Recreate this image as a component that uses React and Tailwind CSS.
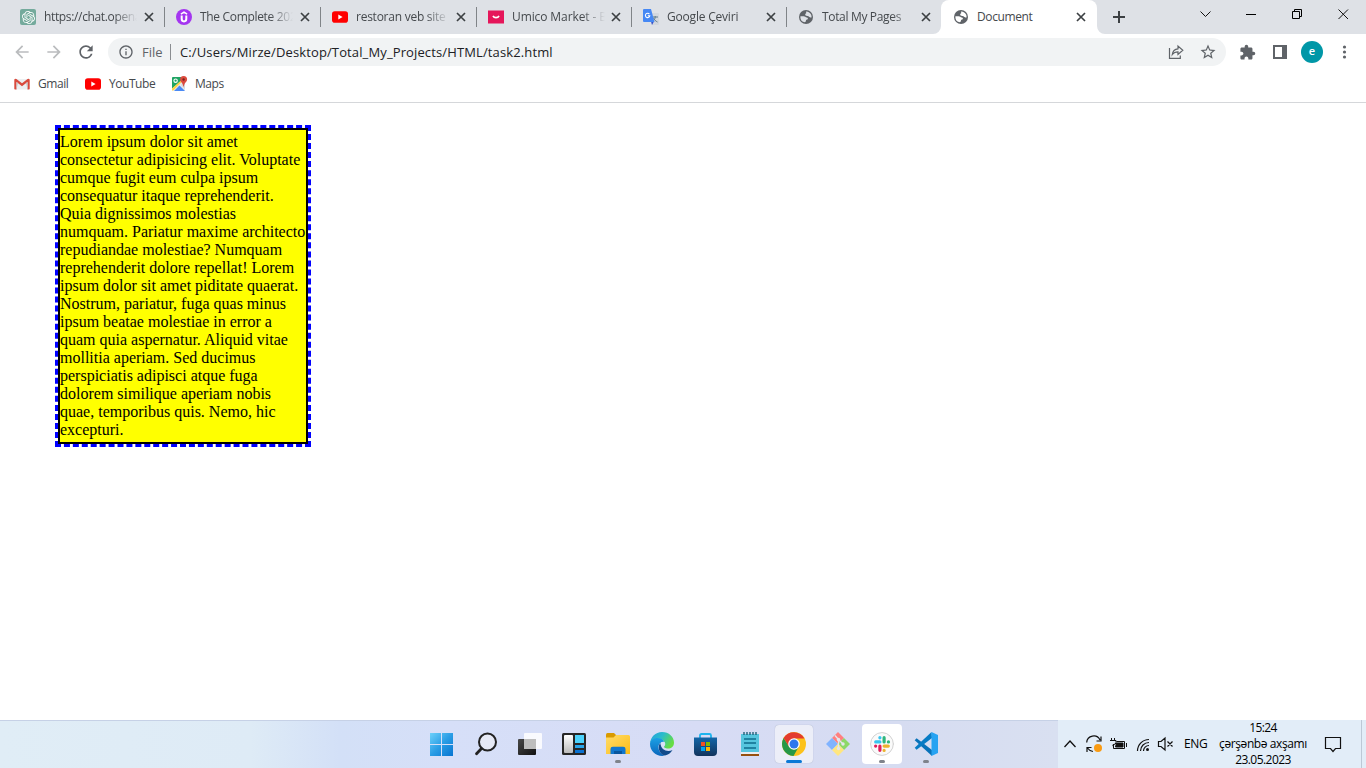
import React from "react";
import { MdExtension, MdStarBorder, MdRefresh, MdInfoOutline, MdArrowBack, MdArrowForward } from "react-icons/md";
import { SiOpenai } from "react-icons/si";

const Globe = ({ bg }) => (
  <svg width="16" height="16" viewBox="0 0 16 16">
    <circle cx="8" cy="8" r="7" fill="#5f6368" />
    <path d="M2.400 7.200h3.300c1.400 0 1.900 1.200 3 1.200 1.500 0 1.600 1.800.4 2.100-1.300.2-1 .9-1.200 1.700-.1.700-.9.600-1.400 1.100A5.600 5.600 0 0 1 2.400 7.200z" fill={bg} />
    <path d="M8.200 2.400c2.200 0 4.200 1.300 5 3.300.4 1 .5 1.900.3 2.900-.9.100-1.300-.5-2-.7-.8-.2-1.200-.9-2.300-.9-1.200 0-2.200-.6-2-1.700.1-.8 1.200-.8 1.100-1.500-.1-.5-.6-.9-.1-1.400z" fill={bg} />
  </svg>
);

const YouTube = () => (
  <svg width="16" height="16" viewBox="0 0 16 16">
    <rect y="2.300" width="16" height="11.400" rx="2.800" fill="#f00" />
    <path d="M6.300 5.500v5L10.600 8z" fill="#fff" />
  </svg>
);

const Gpt = () => (
  <span className="flex size-4 items-center justify-center rounded-[2px] bg-[#74aa9c] text-white">
    <SiOpenai size={13} />
  </span>
);

const Udemy = () => (
  <svg width="16" height="16" viewBox="0 0 16 16">
    <circle cx="8" cy="8" r="8" fill="#a435f0" />
    <path d="M4.900 5.100 8 3.200l3.100 1.900" fill="none" stroke="#fff" strokeWidth="1.500" />
    <path d="M5.700 6.500v3.600a2.300 2.300 0 0 0 4.600 0V6.500" fill="none" stroke="#fff" strokeWidth="2" />
  </svg>
);

const Umico = () => (
  <svg width="16" height="16" viewBox="0 0 16 16">
    <rect y="1.500" width="16" height="13" fill="#e5165a" />
    <path d="M5 6.800c1.100 2.400 4.900 2.400 6 0" fill="none" stroke="#fff" strokeWidth="1.600" />
  </svg>
);

const Translate = () => (
  <svg width="16" height="16" viewBox="0 0 16 16">
    <path d="M7 4h8a1 1 0 0 1 1 1v10a1 1 0 0 1-1 1H9z" fill="#d3d7dd" />
    <path d="M9.500 8h5.500M12.200 7v1c0 2-1.200 3.600-2.700 4.500M10.500 9c1 2 2 3 4 4" fill="none" stroke="#607d8b" />
    <path d="M8 12.500h3L9 16z" fill="#3450c8" />
    <path d="M1 0h7l3.500 13H1a1 1 0 0 1-1-1V1a1 1 0 0 1 1-1z" fill="#4688f4" />
    <path d="M6.400 5.100a2.200 2.200 0 1 0 .4 1.600H4.800" fill="none" stroke="#fff" strokeWidth="1.100" />
  </svg>
);

const Gmail = () => (
  <svg width="16" height="16" viewBox="0 0 16 16">
    <path d="M2 3h12v10.500H2z" fill="#eceff1" />
    <path d="M.3 3.500v9.300q0 .7.700.7h1.500V6L8 10.300 13.500 6v7.500H15q.7 0 .7-.7V3.500q-.8-1.200-2.100-.5L8 7.300 2.400 3Q1.100 2.300.3 3.500z" fill="#d94a3d" />
    <path d="M2.500 6v7.500L4 7.100zM13.500 6v7.500L12 7.100z" fill="#c5c8ca" />
  </svg>
);

const Maps = () => (
  <svg width="16" height="16" viewBox="0 0 16 16">
    <path d="M1 1h9l3 4v9.500H1A1 1 0 0 1 0 13.500V2a1 1 0 0 1 1-1z" fill="#e8eaed" />
    <path d="M1 1h8.500v3.500L0 12.500V2a1 1 0 0 1 1-1z" fill="#1fa463" />
    <path d="M2 15l5.500-5.500L13 15z" fill="#4a8af4" />
    <path d="M0 12.400 9 4.500 10 5.800 1 14.700Q0 14.500 0 13.700z" fill="#fdd447" />
    <path d="M9 9.300l4 4V8.500L11 6z" fill="#d5d8dc" />
    <circle cx="3.600" cy="4.700" r="1.700" fill="none" stroke="#fff" strokeWidth="1.100" />
    <path d="M11.600 0a3.500 3.500 0 0 1 3.500 3.500c0 2.500-3 3.300-3.200 7h-.6C11.100 6.800 8.100 6 8.100 3.500A3.500 3.500 0 0 1 11.600 0z" fill="#dc4b3e" />
    <circle cx="11.600" cy="3.500" r="1.200" fill="#7b231b" />
  </svg>
);

const CloseX = () => (
  <svg width="10" height="10" viewBox="0 0 10 10">
    <path d="M1 1l8 8M9 1L1 9" stroke="#3c4043" strokeWidth="1.700" />
  </svg>
);

const TABS = [
  { icon: <Gpt />, label: "https://chat.opena", w: "w-[156px]", sep: false, track: "tracking-[-0.35px]" },
  { icon: <Udemy />, label: "The Complete 202", w: "w-[156px]", sep: true, track: "tracking-[-0.32px]" },
  { icon: <YouTube />, label: "restoran veb site y", w: "w-[156px]", sep: true, track: "tracking-[-0.25px]" },
  { icon: <Umico />, label: "Umico Market - B", w: "w-[155px]", sep: true, track: "tracking-[-0.1px]" },
  { icon: <Translate />, label: "Google Çeviri", w: "w-[155px]", sep: true, track: "tracking-[-0.2px]" },
  { icon: <Globe bg="#dee1e6" />, label: "Total My Pages", w: "w-[155px]", sep: true, track: "tracking-[-0.33px]" },
];

function TabStrip() {
  return (
    <div className="flex h-[34px] bg-[#dee1e6] pl-2 text-[12px] text-[#45494d]">
      {TABS.map((t) => (
        <div key={t.label} className={`${t.w} relative flex h-full shrink-0 items-center pl-3`}>
          {t.sep && <span className="absolute left-0 top-[7px] h-5 w-px bg-[#808488]" />}
          {t.icon}
          <span
            className={`${t.track} ml-2 w-[93px] overflow-hidden whitespace-nowrap [mask-image:linear-gradient(to_right,#000_70px,transparent_93px)]`}
          >
            {t.label}
          </span>
          <span className="absolute right-[10px] top-3">
            <CloseX />
          </span>
        </div>
      ))}
      <div className="relative flex h-full w-[156px] shrink-0 items-center rounded-t-[8px] bg-white pl-3">
        <svg className="absolute -left-2 bottom-0" width="8" height="8">
          <path d="M8 0a8 8 0 0 1-8 8h8z" fill="#fff" />
        </svg>
        <svg className="absolute -right-2 bottom-0" width="8" height="8">
          <path d="M0 0a8 8 0 0 0 8 8H0z" fill="#fff" />
        </svg>
        <Globe bg="#fff" />
        <span className="ml-2 tracking-[-0.4px]">Document</span>
        <span className="absolute right-[11px] top-3">
          <CloseX />
        </span>
      </div>
      <svg className="ml-4 mt-[11px]" width="12" height="12">
        <path d="M6 0v12M0 6h12" stroke="#3c4043" strokeWidth="2" />
      </svg>
      <svg className="ml-auto" width="166" height="28" fill="none" stroke="#111" strokeWidth="1">
        <path d="M0.500 11.500l5 5 5-5" />
        <path d="M46 14.500h10" stroke="#000" />
        <path d="M92.500 11.500h7v7h-7zM94.500 11.500v-2h7v7h-2" stroke="#000" />
        <path d="M138.500 9.500l9.500 9.500M148 9.500L138.500 19" />
      </svg>
    </div>
  );
}

function Toolbar() {
  return (
    <div className="flex h-9 items-center bg-white text-[#5f6368]">
      <div className="flex w-[108px] items-center">
        <MdArrowBack size={20} className="ml-[12px] text-[#babcbe]" />
        <MdArrowForward size={20} className="ml-3 text-[#babcbe]" />
        <MdRefresh size={20} className="ml-3" />
      </div>
      <div className="flex h-7 w-[1118px] items-center rounded-full bg-[#f1f3f4] pl-[10px] pr-[9px] text-[13px]">
        <MdInfoOutline size={16} />
        <span className="ml-2 w-5 pt-px">File</span>
        <span className="ml-2 h-4 w-px bg-[#8a8d91]" />
        <span className="ml-[9px] whitespace-nowrap pt-px tracking-[0.125px] text-[#202124]">
          C:/Users/Mirze/Desktop/Total_My_Projects/HTML/task2.html
        </span>
        <svg className="ml-auto mr-[15px]" width="16" height="16" fill="none" stroke="#5f6368" strokeWidth="1.200">
          <path d="M1.500 4v10.400h10.800V11.500" />
          <path d="M4.300 10.500C4.700 7 6.700 5 10 4.800V2l4.800 4.300L10 10.500V7.800C7.500 7.800 5.800 8.500 4.300 10.500z" />
        </svg>
        <MdStarBorder size={18} />
      </div>
      <MdExtension size={17} className="ml-[13px]" />
      <svg className="ml-4" width="16" height="16">
        <path d="M2 2h12v12H2z" fill="none" stroke="#5f6368" strokeWidth="2" />
        <path d="M10 1h5v14h-5z" fill="#5f6368" />
      </svg>
      <span className="ml-[13px] flex size-[22px] items-center justify-center rounded-full bg-[#0097a7] pb-px text-[11px] font-semibold text-white">
        e
      </span>
      <svg className="ml-[19px]" width="5" height="14" fill="#5f6368">
        <circle cx="2.500" cy="2" r="1.600" />
        <circle cx="2.500" cy="7" r="1.600" />
        <circle cx="2.500" cy="12" r="1.600" />
      </svg>
    </div>
  );
}

function Bookmarks() {
  return (
    <div className="flex h-[33px] items-center border-b border-[#d5d7da] bg-white pb-1 pl-[14px] text-[12px] text-[#45494d]">
      <Gmail />
      <span className="ml-2 w-[47px] tracking-[-0.45px]">Gmail</span>
      <YouTube />
      <span className="ml-2 w-[63px] tracking-[-0.45px]">YouTube</span>
      <Maps />
      <span className="ml-[7px] tracking-[-0.45px]">Maps</span>
    </div>
  );
}

const LINES = [
  "Lorem ipsum dolor sit amet",
  "consectetur adipisicing elit. Voluptate",
  "cumque fugit eum culpa ipsum",
  "consequatur itaque reprehenderit.",
  "Quia dignissimos molestias",
  "numquam. Pariatur maxime architecto",
  "repudiandae molestiae? Numquam",
  "reprehenderit dolore repellat! Lorem",
  "ipsum dolor sit amet piditate quaerat.",
  "Nostrum, pariatur, fuga quas minus",
  "ipsum beatae molestiae in error a",
  "quam quia aspernatur. Aliquid vitae",
  "mollitia aperiam. Sed ducimus",
  "perspiciatis adipisci atque fuga",
  "dolorem similique aperiam nobis",
  "quae, temporibus quis. Nemo, hic",
  "excepturi.",
];

function Page() {
  return (
    <div className="h-[617px] bg-white pl-[58px] pt-[25px]">
      <p className="h-[316px] w-[250px] border-2 border-black bg-[#ff0] pt-[3px] font-['Liberation_Serif',serif] text-[16px] leading-[18px] text-black outline-3 outline-dashed outline-[#00f]">
        {LINES.map((l) => (
          <span key={l} className="block whitespace-nowrap">
            {l}
          </span>
        ))}
      </p>
    </div>
  );
}

const Start = () => (
  <svg width="24" height="24">
    <defs>
      <linearGradient id="win" x1="0" y1="0" x2="24" y2="24" gradientUnits="userSpaceOnUse">
        <stop stopColor="#6fd3fb" />
        <stop offset=".5" stopColor="#2a9de5" />
        <stop offset="1" stopColor="#0673d0" />
      </linearGradient>
    </defs>
    <path d="M0 1h11v11H0zM12 1h11v11H12zM0 13h11v11H0zM12 13h11v11H12z" fill="url(#win)" />
  </svg>
);
const Search = () => (
  <svg width="24" height="24" fill="none" stroke="#222">
    <circle cx="13.500" cy="10" r="8.500" strokeWidth="2" fill="#e6e9f5" />
    <path d="M7.500 16.500L2.500 21.800" strokeWidth="2.800" strokeLinecap="round" />
  </svg>
);
const TaskView = () => (
  <svg width="24" height="24">
    <defs>
      <linearGradient id="tv" x1="0" y1="0" x2="1" y2="1">
        <stop stopColor="#484848" />
        <stop offset="1" stopColor="#111" />
      </linearGradient>
    </defs>
    <rect x="0" y="7" width="18" height="16" rx="1" fill="url(#tv)" />
    <rect x="6" y="1" width="18" height="16" rx="1" fill="#fff" opacity=".85" />
    <path d="M6 7h12v10H7q-1 0-1-1z" fill="#bdbdbd" />
  </svg>
);
const Widgets = () => (
  <svg width="24" height="24">
    <defs>
      <linearGradient id="wd" x1="0" y1="0" x2="0" y2="1">
        <stop stopColor="#fff" />
        <stop offset="1" stopColor="#bbb" />
      </linearGradient>
    </defs>
    <rect y="1" width="24" height="22" rx="1.500" fill="#262626" />
    <rect x="2" y="3" width="9" height="18" rx="1" fill="url(#wd)" />
    <rect x="13" y="3" width="9" height="8" fill="#4cd2fc" />
    <rect x="13" y="13" width="9" height="3" fill="#28a5ea" />
    <rect x="13" y="18" width="9" height="3" fill="#0b72d0" />
  </svg>
);
const Folder = () => (
  <svg width="24" height="24">
    <defs>
      <linearGradient id="fd" x1="0" y1="0" x2="1" y2="1">
        <stop stopColor="#ffdc6a" />
        <stop offset="1" stopColor="#fcbc16" />
      </linearGradient>
    </defs>
    <path d="M0 2.500Q0 1 1.500 1H8l2 2v4H0z" fill="#d99a00" />
    <path d="M0 5.500h7.500L10 3h12.500Q24 3 24 4.500V22H0z" fill="url(#fd)" />
    <path d="M4.500 22v-5q0-2.300 2.300-2.300h10.400q2.300 0 2.300 2.300v5z" fill="#1177ce" />
    <path d="M8 19h8v3H8z" fill="#0a579f" />
  </svg>
);
const Edge = () => (
  <svg width="24" height="24">
    <defs>
      <linearGradient id="e1" x1="0" y1="0" x2="1" y2=".5">
        <stop stopColor="#239fe0" />
        <stop offset=".5" stopColor="#2bbccb" />
        <stop offset="1" stopColor="#66dd43" />
      </linearGradient>
      <linearGradient id="e2" x1="0" y1="0" x2="0" y2="1">
        <stop stopColor="#1ba0e4" />
        <stop offset="1" stopColor="#0b66bc" />
      </linearGradient>
    </defs>
    <path d="M0 11.500C.5 5 5.500 0 12 0c7 0 12 5 12 10.500 0 4-2.700 6-6 6-3 0-4.600-1-3.600-2.500C16.500 10 12 6.500 8 6.500c-4 0-7 2.200-8 5z" fill="url(#e1)" />
    <path d="M0 12c0-3.500 3.500-6 7.500-6 3.300 0 6 1.500 6.500 4-4-.5-6 3-5.500 6 .5 4 3.500 6.700 6.500 7.600C7.500 25.500 0 19.500 0 12z" fill="url(#e2)" />
    <path d="M10.500 11C7.500 13 8 22 15 23.600c3-.7 5.800-2.600 7.500-5.600-5 2.500-12 0-12-7z" fill="#114a8b" />
    <circle cx="13" cy="12" r="2.300" fill="#d8e0f6" />
  </svg>
);
const Store = () => (
  <svg width="24" height="24">
    <defs>
      <linearGradient id="st" x1="0" y1="0" x2="0" y2="1">
        <stop stopColor="#1366a8" />
        <stop offset="1" stopColor="#12335c" />
      </linearGradient>
    </defs>
    <path d="M6 6V3.500Q6 2 7.500 2h8q1.500 0 1.500 1.500V6" fill="none" stroke="#1cb4ee" strokeWidth="1.800" />
    <path d="M0 5.500h23V20q0 4-4 4H4q-4 0-4-4z" fill="url(#st)" />
    <path d="M7 10h4v4H7z" fill="#f25022" />
    <path d="M12 10h4v4h-4z" fill="#7fba00" />
    <path d="M7 15h4v4H7z" fill="#00a4ef" />
    <path d="M12 15h4v4h-4z" fill="#ffb900" />
  </svg>
);
const Notepad = () => (
  <svg width="24" height="24">
    <path d="M3 2h18v18H3z" fill="#56c5de" />
    <path d="M3 20h18v2H3z" fill="#e9eef2" />
    <path d="M3 22h18v2H3z" fill="#96500f" />
    <path d="M6 0v3M9 0v3M12 0v3M15 0v3M18 0v3" stroke="#21617a" strokeWidth="1.400" />
    <path d="M6 7h12M6 11h12M6 16h12" stroke="#0f6c8d" strokeWidth="1.600" />
  </svg>
);
const Chrome = () => (
  <svg width="24" height="24">
    <circle cx="12" cy="12" r="12" fill="#fcc21b" />
    <path d="M1.610 6L7.200 14.800 12 17.500 16.800 14.800 11.500 24A12 12 0 0 1 1.610 6z" fill="#279847" />
    <path d="M1.610 6A12 12 0 0 1 22.400 6.500H12L7.200 14.800z" fill="#e33b2e" />
    <circle cx="12" cy="12" r="5.800" fill="#fff" />
    <circle cx="12" cy="12" r="4.500" fill="#2d77ee" />
  </svg>
);
const Git = () => (
  <svg width="24" height="24">
    <path d="M12 0l6 6-6 6-6-6z" fill="#ff8080" />
    <path d="M18 6l6 6-6 6-6-6z" fill="#8cd867" />
    <path d="M6 6l6 6-6 6-6-6z" fill="#80b3ff" />
    <path d="M12 12l6 6-6 6-6-6z" fill="#ffe680" />
    <path d="M9 3.500l3.500 4v9M13 8l4 4" fill="none" stroke="#e4e6ec" strokeWidth="1.400" />
    <g fill="#e4e6ec">
      <circle cx="12.500" cy="7.500" r="1.700" />
      <circle cx="17" cy="12" r="1.700" />
      <circle cx="12.500" cy="16.500" r="1.700" />
    </g>
  </svg>
);
const Slack = () => (
  <svg width="24" height="24" strokeWidth="3.200" strokeLinecap="round">
    <circle cx="12" cy="12" r="11.400" fill="#fafafa" stroke="#d2d2d2" strokeWidth="1" />
    <path d="M5.700 9.900H9.900" stroke="#36c5f0" />
    <path d="M9.900 5.500v.3" stroke="#36c5f0" />
    <path d="M14.100 5.700V9.900M18.400 9.900h.1" stroke="#2eb67d" />
    <path d="M14.100 14.100h4.200M14.100 18.400v.1" stroke="#ecb22e" />
    <path d="M9.900 14.100v4.200M5.600 14.100h.1" stroke="#e01e5a" />
  </svg>
);
const Code = () => (
  <svg width="24" height="24">
    <path d="M.7 8.300L2.600 6.300 18 18v6z" fill="#0872b9" />
    <path d="M.7 15.700L17.500 0 18 6 2.600 17.700z" fill="#087cc5" />
    <path d="M17.500 0L24 3v18l-6.500 3z" fill="#27a3f2" />
  </svg>
);

const APPS = [
  { id: "start", el: <Start /> },
  { id: "search", el: <Search /> },
  { id: "tasks", el: <TaskView /> },
  { id: "widgets", el: <Widgets /> },
  { id: "files", el: <Folder />, dot: true },
  { id: "edge", el: <Edge /> },
  { id: "store", el: <Store /> },
  { id: "notepad", el: <Notepad /> },
  { id: "chrome", el: <Chrome />, box: "bg-[#eceef8] shadow-[0_0_1px_#9aa4bb]", active: true },
  { id: "git", el: <Git /> },
  { id: "slack", el: <Slack />, box: "bg-white", big: true, dot: true },
  { id: "code", el: <Code />, dot: true },
];

function Taskbar() {
  return (
    <div className="flex h-12 bg-[linear-gradient(to_right,#e0edf6_0px,#deebf6_250px,#d3e0f7_340px,#d6dff8_450px,#d7dcf5_700px,#d6dcf1_900px,#d9e0f1_1057px)]">
      <div className="flex w-[1058px] border-t border-[#c6d1e6] pl-[420px]">
        {APPS.map((a) => (
          <div key={a.id} className="relative -mt-px flex h-12 w-11 items-center justify-center">
            {a.box && (
              <span className={`${a.box} ${a.big ? "size-10" : "size-[38px]"} absolute rounded-[4px]`} />
            )}
            <span className="relative">{a.el}</span>
            {a.dot && <span className="absolute bottom-[5px] h-[3px] w-[6px] rounded-full bg-[#7f838b]" />}
            {a.active && <span className="absolute bottom-[5px] h-[3px] w-4 rounded-full bg-[#0a78d6]" />}
          </div>
        ))}
      </div>
      <div className="flex h-12 flex-1 items-center bg-[#e2edf8] text-[12px] text-black">
        <svg width="126" height="24" fill="none" stroke="#111">
          <path d="M6.500 15l5.500-6 5.500 6" strokeWidth="1.300" />
          <path d="M28.700 10.500a7 7 0 0 1 13.300-2.500M43 4.500v4.500h-4.500M33.500 15.500h-4.500v4.500M29.500 16a8 8 0 0 0 5.500 3.500" strokeWidth="1.200" />
          <circle cx="40" cy="16" r="4" fill="#f99b13" stroke="none" />
          <path d="M58.500 9.500h8v7h-11v-4" />
          <path d="M58.500 11H65v4h-7.500z" fill="#111" />
          <path d="M68.500 11v4M53.500 6v2M56.500 6v2M52 8.500h6v2q0 2-3 2.200v1.500" />
          <path d="M79.500 19A11.500 11.500 0 0 1 91 7.500M82.500 19a8.500 8.500 0 0 1 8.500-8.500M85.500 19a5.500 5.500 0 0 1 5.500-5.500" strokeWidth="1.200" />
          <circle cx="89.500" cy="17.500" r="1.500" fill="#111" stroke="none" />
          <path d="M100.500 9.500h2.500l4-3.500v12l-4-3.500h-2.500zM109.500 9.500l5 5M114.500 9.500l-5 5" strokeWidth="1.200" />
        </svg>
        <span className="w-[32px] tracking-[-0.3px]">ENG</span>
        <div className="flex w-[94px] flex-col items-center whitespace-nowrap leading-4">
          <span className="tracking-[-0.600px]">15:24</span>
          <span className="tracking-[-0.400px]">çərşənbə axşamı</span>
          <span className="tracking-[-0.550px]">23.05.2023</span>
        </div>
        <svg className="ml-[14px]" width="18" height="18" fill="none" stroke="#111" strokeWidth="1.200">
          <path d="M1.500 2.500h15v11h-5l-2.500 3-2.500-3h-5z" />
        </svg>
        <span className="ml-auto mr-1 h-full w-px bg-[#bcc8d6]" />
      </div>
    </div>
  );
}

export default function App() {
  return (
    <div className="flex h-[768px] w-[1366px] flex-col overflow-hidden bg-white font-['Open_Sans','Noto_Sans',sans-serif]">
      <TabStrip />
      <Toolbar />
      <Bookmarks />
      <Page />
      <Taskbar />
    </div>
  );
}
